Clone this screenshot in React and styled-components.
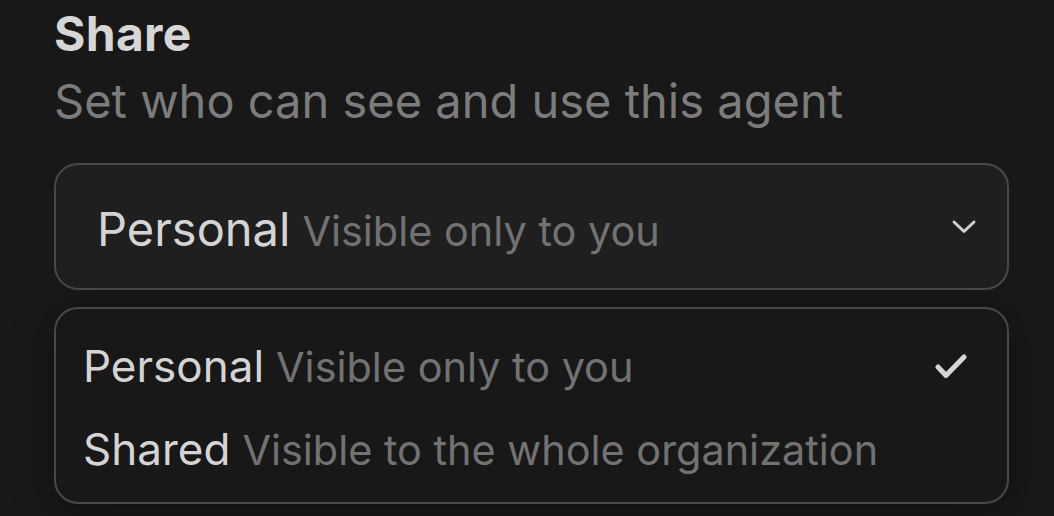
import React from "react";
import styled, { createGlobalStyle } from "styled-components";

const Global = createGlobalStyle`
  html, body { margin: 0; padding: 0; background: #181818; }
  body { font-family: Inter, "Noto Sans", sans-serif; -webkit-font-smoothing: antialiased; }
`;

const Page = styled.div`
  width: 1054px;
  height: 516px;
  box-sizing: border-box;
  padding: 6px 45px 0 54px;
  background: #181818;
  overflow: hidden;
`;

const Title = styled.h2`
  margin: 0;
  font-size: 48px;
  line-height: 56px;
  font-weight: 700;
  color: #d6d6d6;
  letter-spacing: 0.3px;
`;

const Subtitle = styled.p`
  margin: 11px 0 0 0;
  font-size: 47px;
  line-height: 56px;
  font-weight: 400;
  color: #7c7c7c;
`;

const Select = styled.div`
  margin-top: 34px;
  height: 127px;
  box-sizing: border-box;
  border: 2px solid #484848;
  border-radius: 24px;
  background: #1f1f1f;
  display: flex;
  align-items: center;
  padding: 6px 30px 0 41px;
`;

const Label = styled.span`
  font-size: ${(p) => p.$size}px;
  color: #d4d4d4;
  font-weight: 400;
`;

const Hint = styled.span`
  font-size: 41.4px;
  color: #727272;
  margin-left: 12px;
`;

const Text = styled.div`
  flex: 1;
  display: flex;
  align-items: baseline;
  line-height: 56px;
  white-space: nowrap;
`;

const Chevron = styled.svg`
  flex: none;
  margin-top: -6px;
`;

const Menu = styled.div`
  margin-top: 17px;
  box-sizing: border-box;
  height: 197px;
  border: 2px solid #484848;
  border-radius: 24px;
  background: #181818;
  box-shadow: 0 8px 40px rgba(0, 0, 0, 0.35);
  padding: 16px 40px 0 27px;
  display: flex;
  flex-direction: column;
`;

const Item = styled.div`
  display: flex;
  align-items: center;
  height: 83px;
`;

const Check = styled.svg`
  flex: none;
`;

export default function App() {
  return (
    <>
      <Global />
      <Page>
        <Title>Share</Title>
        <Subtitle>Set who can see and use this agent</Subtitle>
        <Select>
          <Text>
            <Label $size={47}>Personal</Label>
            <Hint>Visible only to you</Hint>
          </Text>
          <Chevron width="26" height="16" viewBox="0 0 26 16">
            <path d="M3 3 L13 12.5 L23 3" fill="none" stroke="#d0d0d0" strokeWidth="3" strokeLinecap="round" strokeLinejoin="round" />
          </Chevron>
        </Select>
        <Menu>
          <Item>
            <Text>
              <Label $size={44}>Personal</Label>
              <Hint>Visible only to you</Hint>
            </Text>
            <Check width="32" height="25" viewBox="0 0 32 25">
              <path d="M3 13 L11 21.5 L29 3" fill="none" stroke="#d6d6d6" strokeWidth="5" strokeLinecap="round" strokeLinejoin="round" />
            </Check>
          </Item>
          <Item>
            <Text>
              <Label $size={44}>Shared</Label>
              <Hint>Visible to the whole organization</Hint>
            </Text>
          </Item>
        </Menu>
      </Page>
    </>
  );
}
